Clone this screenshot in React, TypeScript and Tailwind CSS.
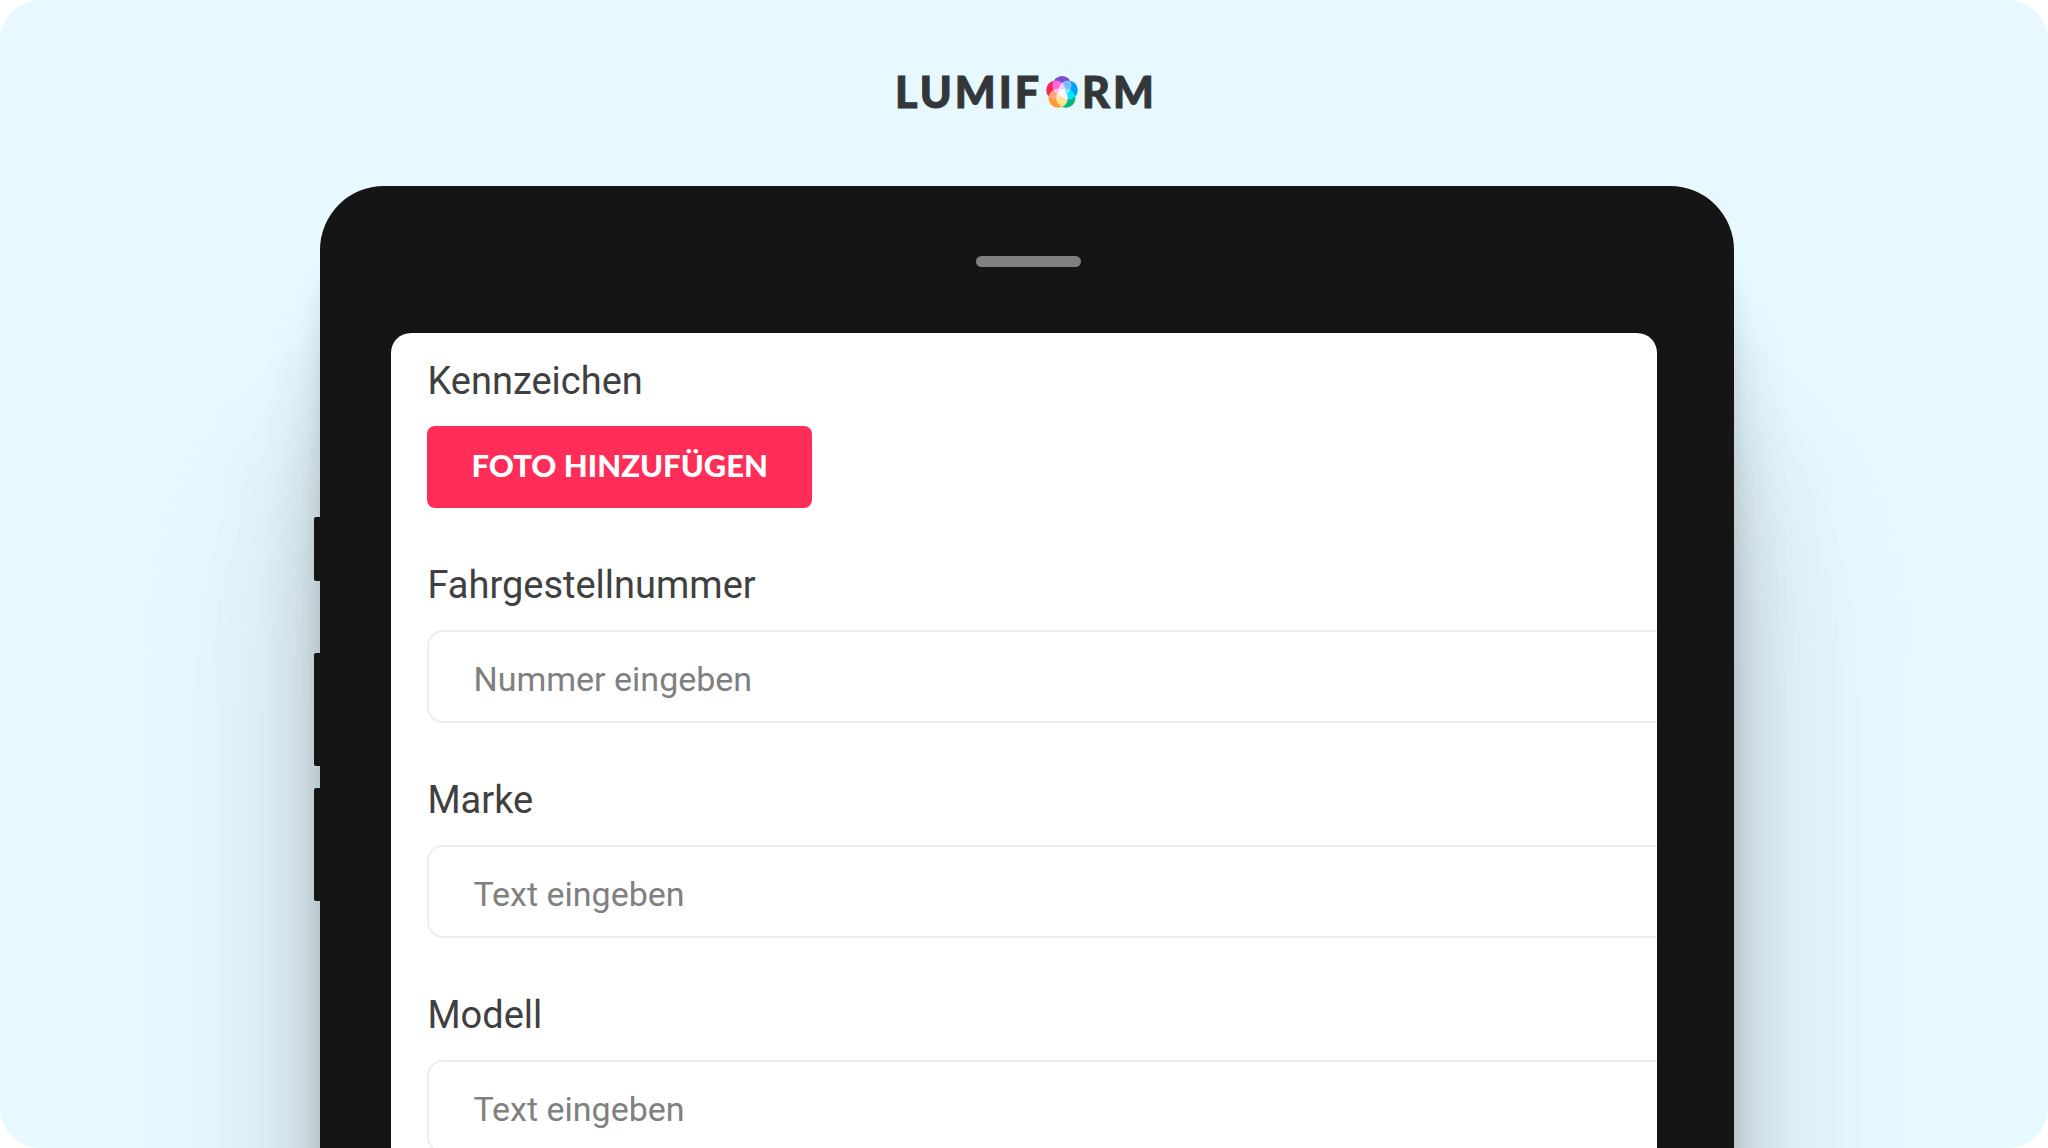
const fields = [
  { id: "vin", label: "Fahrgestellnummer", placeholder: "Nummer eingeben" },
  { id: "brand", label: "Marke", placeholder: "Text eingeben" },
  { id: "model", label: "Modell", placeholder: "Text eingeben" },
];

const Orb = () => {
  return (
    <svg viewBox="0 0 32 32" className="isolate size-8" aria-hidden="true">
      <g>
        <circle className="mix-blend-screen" cx="16" cy="9.6" r="9.6" fill="#7c4dcc" />
        <circle className="mix-blend-screen" cx="22.2" cy="14" r="9.6" fill="#00a0ff" />
        <circle className="mix-blend-screen" cx="19.8" cy="22.2" r="9.6" fill="#00b67a" />
        <circle className="mix-blend-screen" cx="12.2" cy="22.2" r="9.6" fill="#ff9a2e" />
        <circle className="mix-blend-screen" cx="9.8" cy="14" r="9.6" fill="#f5275c" />
      </g>
    </svg>
  );
};

const Logo = () => {
  return (
    <div className="flex items-center justify-center gap-1 pl-1 font-['Lato',sans-serif] text-[43px] leading-12 font-black tracking-[3px] text-[#33373a] [-webkit-text-stroke:1px_#33373a]">
      <span>LUMIF</span>
      <Orb />
      <span>RM</span>
    </div>
  );
};

const Form = () => {
  return (
    <form className="flex flex-col gap-[53px] pt-6 pl-9">
      {/* Foto */}
      <div className="flex flex-col items-start gap-[21px]">
        <label htmlFor="photo" className="text-[38px] leading-12">
          Kennzeichen
        </label>
        <button
          id="photo"
          type="button"
          className="h-[82px] rounded-lg bg-[#ff2d58] px-11 pb-1 font-['Lato',sans-serif] text-[31px] font-black text-white"
        >
          FOTO HINZUFÜGEN
        </button>
      </div>

      {/* Textfelder */}
      {fields.map((field) => (
        <div key={field.id} className="flex flex-col gap-[21px]">
          <label htmlFor={field.id} className="text-[38px] leading-12">
            {field.label}
          </label>
          <input
            id={field.id}
            type="text"
            placeholder={field.placeholder}
            className="h-[93px] w-full rounded-l-2xl border-2 border-r-0 border-[#ebeeee] pt-1 pl-11 text-[34px] placeholder:text-[#808080]"
          />
        </div>
      ))}
    </form>
  );
};

const App = () => {
  return (
    <div className="bg-white">
      <main className="flex h-screen flex-col overflow-hidden rounded-[40px] bg-[#e7f9ff] pt-17 font-['Roboto',sans-serif] text-[#404040]">
        <Logo />

        {/* Tablet */}
        <div className="relative mt-[70px] ml-1.5 flex min-h-0 w-[69%] flex-1 flex-col self-center rounded-t-[64px] bg-[#151515] pr-[77px] pl-[71px] shadow-[0_60px_24px_0_rgba(0,0,0,0.08),0_120px_60px_0_rgba(0,0,0,0.12),0_220px_120px_0_rgba(0,0,0,0.1),0_300px_200px_0_rgba(0,0,0,0.12)]">
          {/* Seitentasten */}
          <div className="absolute top-[331px] -left-1.5 flex flex-col gap-[22px]">
            <div className="mb-[50px] h-16 w-2 rounded-l-xs bg-[#151515]" />
            <div className="h-[113px] w-2 rounded-l-xs bg-[#151515]" />
            <div className="h-[113px] w-2 rounded-l-xs bg-[#151515]" />
          </div>

          <div className="mt-[70px] mb-[66px] ml-[9px] h-[11px] w-[105px] shrink-0 self-center rounded-full bg-[#808080]" />

          <div className="min-h-0 flex-1 overflow-hidden rounded-t-[20px] bg-white">
            <Form />
          </div>
        </div>
      </main>
    </div>
  );
};

export default App;
